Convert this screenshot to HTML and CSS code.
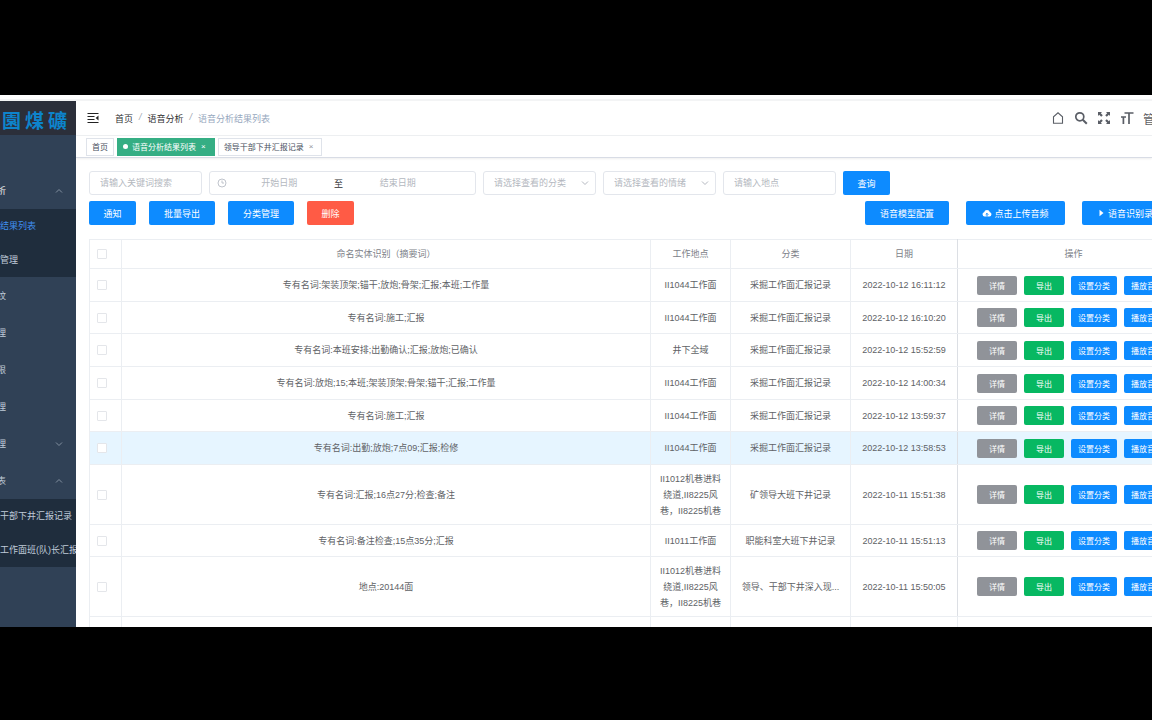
FILE: index.html
```html
<!DOCTYPE html>
<html lang="zh-CN">
<head>
<meta charset="utf-8">
<title>语音分析结果列表</title>
<link rel="stylesheet" href="styles.css">
</head>
<body>
<div class="app">
  <aside class="sidebar">
    <div class="logo"><span>園</span><span>煤</span><span>礦</span></div>
    <nav class="menu">
      <a class="menu-item" href="#"></a>
      <a class="menu-item open" href="#"><span>析</span><svg class="caret" viewBox="0 0 8 8"><path d="M1 5.500 4 2.500 7 5.500"/></svg></a>
      <div class="submenu">
        <a class="sub-item active" href="#">结果列表</a>
        <a class="sub-item" href="#">管理</a>
      </div>
      <a class="menu-item" href="#"><span>纹</span></a>
      <a class="menu-item" href="#"><span>理</span></a>
      <a class="menu-item" href="#"><span>限</span></a>
      <a class="menu-item" href="#"><span>理</span></a>
      <a class="menu-item" href="#"><span>理</span><svg class="caret" viewBox="0 0 8 8"><path d="M1 2.500 4 5.500 7 2.500"/></svg></a>
      <a class="menu-item" href="#"><span>表</span><svg class="caret" viewBox="0 0 8 8"><path d="M1 5.500 4 2.500 7 5.500"/></svg></a>
      <div class="submenu">
        <a class="sub-item" href="#">干部下井汇报记录</a>
        <a class="sub-item" href="#">工作面班(队)长汇报</a>
      </div>
    </nav>
  </aside>
  <main class="main">
    <header class="navbar">
      <button class="icon-btn fold" aria-label="收起菜单"><svg viewBox="0 0 12 12"><path d="M.5 1.500h11M.5 4.500h7M.5 7.500h7M.5 10.500h11" stroke="#222" stroke-width="1.200" fill="none"/><path d="M11.500 3.600v4.800L8.700 6z" fill="#222"/></svg></button>
      <nav class="crumbs"><a href="#">首页</a><i>/</i><a href="#">语音分析</a><i>/</i><span>语音分析结果列表</span></nav>
      <div class="tools">
        <button class="icon-btn" aria-label="首页"><svg viewBox="0 0 14 14"><path d="M2.500 12.200V5.800L7 1.800l4.500 4v6.400z" fill="none" stroke="#5a5e66" stroke-width="1.100"/></svg></button>
        <button class="icon-btn" aria-label="搜索"><svg viewBox="0 0 14 14"><circle cx="5.800" cy="5.800" r="4" fill="none" stroke="#5a5e66" stroke-width="1.700"/><path d="m8.800 8.800 4 4" stroke="#5a5e66" stroke-width="2"/></svg></button>
        <button class="icon-btn" aria-label="全屏"><svg viewBox="0 0 14 14"><path d="M1 1h4L3.800 2.200l2 2-1.600 1.600-2-2L1 5zM13 1v4l-1.200-1.200-2 2-1.600-1.600 2-2L9 1zM1 13V9l1.200 1.200 2-2 1.600 1.600-2 2L5 13zM13 13H9l1.200-1.200-2-2 1.600-1.600 2 2L13 9z" fill="#5a5e66"/></svg></button>
        <button class="icon-btn" aria-label="字号"><svg viewBox="0 0 14 14"><path d="M4.500 2h9M9 2v11M1 6h5M3.400 6v7" stroke="#5a5e66" stroke-width="1.700" fill="none"/></svg></button>
        <span class="user">管理员</span>
      </div>
    </header>
    <nav class="tabs">
      <a class="tab" href="#">首页</a>
      <a class="tab current" href="#"><b class="dot"></b>语音分析结果列表<em>×</em></a>
      <a class="tab" href="#">领导干部下井汇报记录<em>×</em></a>
    </nav>
    <section class="page">
      <form class="filters">
        <input class="field" type="text" aria-label="关键词" placeholder="请输入关键词搜索">
        <div class="range">
          <svg class="clock" viewBox="0 0 10 10"><circle cx="5" cy="5" r="4"/><path d="M5 2.500V5h2"/></svg>
          <input type="text" aria-label="开始日期" placeholder="开始日期"><span>至</span><input type="text" aria-label="结束日期" placeholder="结束日期">
        </div>
        <div class="picker"><select class="field" aria-label="分类"><option>请选择查看的分类</option></select><svg class="caret" viewBox="0 0 8 8"><path d="M1 2.500 4 5.500 7 2.500"/></svg></div>
        <div class="picker"><select class="field" aria-label="情绪"><option>请选择查看的情绪</option></select><svg class="caret" viewBox="0 0 8 8"><path d="M1 2.500 4 5.500 7 2.500"/></svg></div>
        <input class="field" type="text" aria-label="地点" placeholder="请输入地点">
        <button class="btn" type="button">查询</button>
      </form>
      <div class="actions">
        <button class="btn">通知</button>
        <button class="btn medium">批量导出</button>
        <button class="btn medium">分类管理</button>
        <button class="btn danger">删除</button>
        <div class="actions-end">
          <button class="btn">语音模型配置</button>
          <button class="btn wide"><svg viewBox="0 0 10 10"><path d="M2.600 8.500a2.200 2.200 0 0 1-.5-4.300 3 3 0 0 1 5.800 0 2.200 2.200 0 0 1-.5 4.300z" fill="#fff"/><path d="M5 8.500V5.500M3.700 6.600 5 5.300l1.300 1.300" stroke="#0d8bff" fill="none"/></svg>点击上传音频</button>
          <button class="btn record"><svg viewBox="0 0 10 10"><path d="M3.500 1.800 7.500 5 3.500 8.200z" fill="#fff"/></svg>语音识别录音</button>
        </div>
      </div>
      <table class="grid">
        <colgroup><col class="c-check"><col><col class="c-place"><col class="c-kind"><col class="c-date"><col class="c-ops"></colgroup>
        <thead><tr><th><input type="checkbox" aria-label="全选"></th><th>命名实体识别（摘要词）</th><th>工作地点</th><th>分类</th><th class="date">日期</th><th>操作</th></tr></thead>
        <tbody>
          <tr><td><input type="checkbox" aria-label="选择"></td><td>专有名词:架装顶架;锚干;放炮;骨架;汇报;本班;工作量</td><td>II1044工作面</td><td>采掘工作面汇报记录</td><td class="date">2022-10-12 16:11:12</td><td><div class="ops"><button class="info">详情</button><button class="ok">导出</button><button>设置分类</button><button>播放音频</button></div></td></tr>
          <tr><td><input type="checkbox" aria-label="选择"></td><td>专有名词:施工;汇报</td><td>II1044工作面</td><td>采掘工作面汇报记录</td><td class="date">2022-10-12 16:10:20</td><td><div class="ops"><button class="info">详情</button><button class="ok">导出</button><button>设置分类</button><button>播放音频</button></div></td></tr>
          <tr><td><input type="checkbox" aria-label="选择"></td><td>专有名词:本班安排;出勤确认;汇报;放炮;已确认</td><td>井下全域</td><td>采掘工作面汇报记录</td><td class="date">2022-10-12 15:52:59</td><td><div class="ops"><button class="info">详情</button><button class="ok">导出</button><button>设置分类</button><button>播放音频</button></div></td></tr>
          <tr><td><input type="checkbox" aria-label="选择"></td><td>专有名词:放炮;15;本班;架装顶架;骨架;锚干;汇报;工作量</td><td>II1044工作面</td><td>采掘工作面汇报记录</td><td class="date">2022-10-12 14:00:34</td><td><div class="ops"><button class="info">详情</button><button class="ok">导出</button><button>设置分类</button><button>播放音频</button></div></td></tr>
          <tr><td><input type="checkbox" aria-label="选择"></td><td>专有名词:施工;汇报</td><td>II1044工作面</td><td>采掘工作面汇报记录</td><td class="date">2022-10-12 13:59:37</td><td><div class="ops"><button class="info">详情</button><button class="ok">导出</button><button>设置分类</button><button>播放音频</button></div></td></tr>
          <tr class="hover"><td><input type="checkbox" aria-label="选择"></td><td>专有名词:出勤;放炮;7点09;汇报;检修</td><td>II1044工作面</td><td>采掘工作面汇报记录</td><td class="date">2022-10-12 13:58:53</td><td><div class="ops"><button class="info">详情</button><button class="ok">导出</button><button>设置分类</button><button>播放音频</button></div></td></tr>
          <tr class="tall"><td><input type="checkbox" aria-label="选择"></td><td>专有名词:汇报;16点27分;检查;备注</td><td>II1012机巷进料<br>绕道,II8225风<br>巷，II8225机巷</td><td>矿领导大班下井记录</td><td class="date">2022-10-11 15:51:38</td><td><div class="ops"><button class="info">详情</button><button class="ok">导出</button><button>设置分类</button><button>播放音频</button></div></td></tr>
          <tr><td><input type="checkbox" aria-label="选择"></td><td>专有名词:备注检查;15点35分;汇报</td><td>II1011工作面</td><td>职能科室大班下井记录</td><td class="date">2022-10-11 15:51:13</td><td><div class="ops"><button class="info">详情</button><button class="ok">导出</button><button>设置分类</button><button>播放音频</button></div></td></tr>
          <tr class="tall"><td><input type="checkbox" aria-label="选择"></td><td>地点:20144面</td><td>II1012机巷进料<br>绕道,II8225风<br>巷，II8225机巷</td><td>领导、干部下井深入现...</td><td class="date">2022-10-11 15:50:05</td><td><div class="ops"><button class="info">详情</button><button class="ok">导出</button><button>设置分类</button><button>播放音频</button></div></td></tr>
          <tr><td></td><td></td><td></td><td></td><td></td><td></td></tr>
        </tbody>
      </table>
    </section>
  </main>
</div>
</body>
</html>
```
FILE: styles.css
```css
* { box-sizing: border-box; }
body, button, input, select {
  font-family: "Liberation Sans", "Noto Sans CJK SC", sans-serif;
  font-size: 9px;
}
body {
  margin: 0;
  height: 100vh;
  padding: 95px 0 93px;
  background: #000;
  color: #606266;
  overflow: hidden;
}
a { color: inherit; text-decoration: none; }
button { cursor: pointer; }
.app {
  display: flex;
  height: 100%;
  padding-top: 6px;
  overflow: hidden;
  background: linear-gradient(#fff 4px, #f3f4f5 4px, #f3f4f5 6px, #fff 6px);
}
.caret { width: 8px; height: 8px; fill: none; stroke: #8290a0; stroke-width: 1; }

/* sidebar */
.sidebar { flex: 0 0 76px; overflow: hidden; background: #304156; color: #bfcbd9; }
.logo {
  display: flex;
  gap: 4px;
  height: 34px;
  padding-left: 2px;
  background: #2b2f3a;
  color: #0d84cc;
  font-family: "Noto Sans CJK TC", sans-serif;
  font-size: 19px;
  font-weight: 700;
  line-height: 38px;
}
.menu-item {
  display: flex;
  align-items: center;
  justify-content: space-between;
  height: 37px;
  padding-right: 13px;
  margin-left: -3px;
}
.open { color: #f4f4f5; }
.submenu { background: #1f2d3d; }
.sub-item { display: block; height: 34px; line-height: 35px; white-space: nowrap; }
.active { color: #3f8ff0; }

/* top bars */
.main { flex: 1; min-width: 0; overflow: hidden; background: #fff; }
.navbar {
  display: flex;
  align-items: center;
  height: 35px;
  margin-right: -38px;
  padding: 0 11px;
  border-bottom: 1px solid #eef0f2;
}
.icon-btn { display: flex; padding: 0; border: 0; background: none; }
.icon-btn svg { width: 14px; height: 14px; }
.fold svg { width: 12px; height: 12px; }
.crumbs { display: flex; gap: 6px; margin-left: 16px; color: #303133; }
.crumbs i { color: #a0a6b0; }
.crumbs span { color: #97a8be; }
.tools { display: flex; align-items: center; gap: 9px; margin-left: auto; }
.user { width: 36px; font-size: 12px; line-height: 16px; padding-top: 3px; }
.tabs {
  display: flex;
  align-items: center;
  gap: 3px;
  height: 22px;
  padding: 0 10px;
  border-bottom: 1px solid #d8dce5;
  box-shadow: 0 1px 2px #0001;
}
.tab {
  display: flex;
  align-items: center;
  height: 18px;
  padding: 0 5px;
  border: 1px solid #dfe3ea;
  color: #495060;
  font-size: 8px;
}
.tab em { margin: 0 3px 0 5px; font-style: normal; color: #909399; }
.current { background: #35ae84; border-color: #35ae84; color: #fff; }
.current em { color: #fff; }
.dot { width: 5px; height: 5px; margin-right: 4px; border-radius: 50%; background: #fff; }

/* filters and actions */
.page { margin-right: -38px; padding: 13px 0 0 13px; }
.filters { display: flex; gap: 7px; }
.field, .range {
  height: 24px;
  border: 1px solid #e3e6ec;
  border-radius: 3px;
  background: #fff;
}
.field { width: 113px; padding: 0 10px; color: #b4b8c0; outline: 0; }
::placeholder { color: #b4b8c0; opacity: 1; }
.range { display: flex; align-items: center; width: 267px; padding: 0 25px 0 7px; }
.range input { flex: 1; min-width: 0; padding: 0; border: 0; text-align: center; outline: 0; }
.range span { width: 14px; text-align: center; color: #303133; }
.clock { width: 10px; height: 10px; fill: none; stroke: #c0c4cc; stroke-width: 1; }
.picker { position: relative; }
.picker select { appearance: none; }
.picker .caret { position: absolute; right: 7px; top: 8px; stroke: #b4b8c0; pointer-events: none; }
.btn {
  display: flex;
  align-items: center;
  justify-content: center;
  gap: 2px;
  height: 24px;
  min-width: 47px;
  padding: 0 14px;
  border: 0;
  border-radius: 2px;
  background: #0d8bff;
  color: #fff;
  white-space: nowrap;
}
.btn svg { width: 10px; height: 10px; }
.actions { display: flex; gap: 13px; margin: 6px 0 14px; }
.medium { min-width: 66px; }
.danger { background: #ff5b45; }
.actions-end { display: flex; gap: 17px; margin-left: auto; }
.actions-end .btn { min-width: 84px; }
.actions-end .wide { min-width: 99px; }
.actions-end .record { min-width: 108px; justify-content: flex-start; }

/* results */
.grid { width: 100%; table-layout: fixed; border-collapse: collapse; text-align: center; line-height: 16px; }
.c-check { width: 32px; }
.c-place { width: 80px; }
.c-kind { width: 120px; }
.c-date { width: 107px; }
.c-ops { width: 232px; }
th, td { height: 33px; padding: 0; border: 1px solid #ebeef2; font-weight: 400; }
th { height: 29px; color: #7d8188; }
tbody tr:nth-child(3n+2) td { height: 32px; }
tbody .tall td { height: 60px; }
td:first-child, th:first-child { padding-left: 7px; }
.date { border-right-color: #dcdfe4; }
.hover { background: #e6f5ff; }
.grid input {
  display: block;
  appearance: none;
  width: 10px;
  height: 10px;
  margin: 0;
  border: 1px solid #e4e6ea;
  border-radius: 1px;
  background: #fff;
}
.ops { display: flex; justify-content: center; gap: 7px; }
.ops button {
  height: 19px;
  min-width: 40px;
  padding: 0 7px;
  border: 0;
  border-radius: 2px;
  background: #0d8bff;
  color: #fff;
  font-size: 8px;
  white-space: nowrap;
}
.ops .info { background: #909399; }
.ops .ok { background: #07b862; }
```
